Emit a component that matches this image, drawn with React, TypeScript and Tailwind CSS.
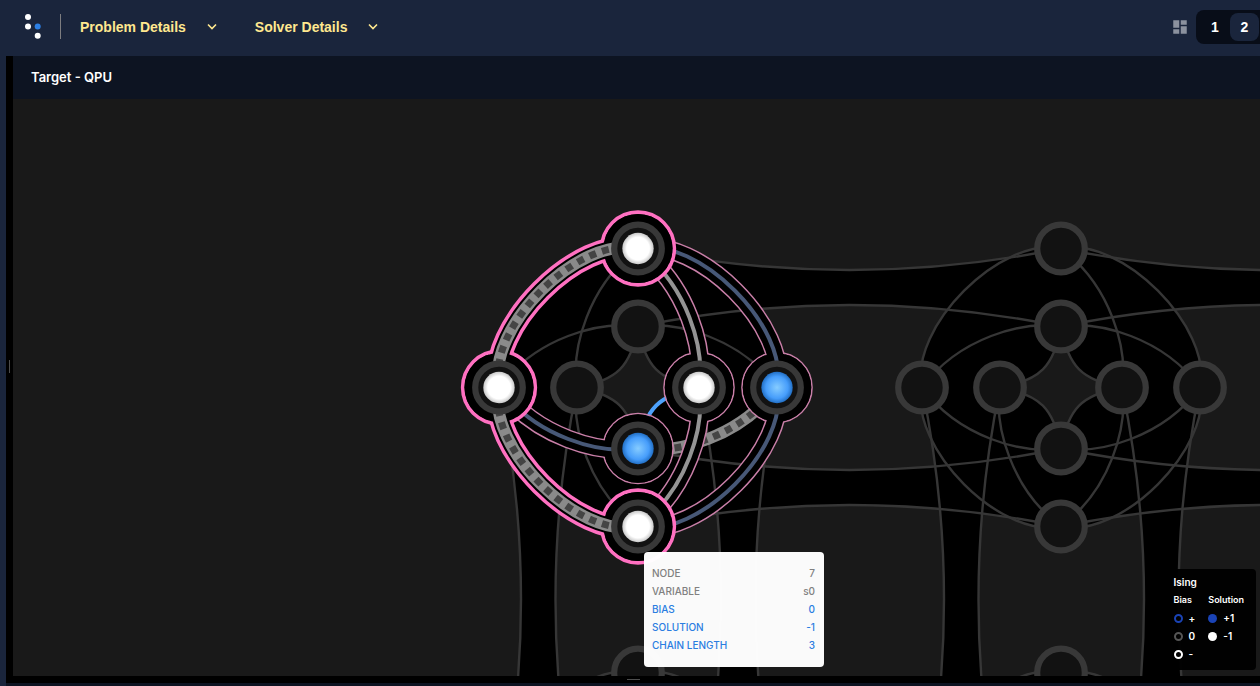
import React from "react";
import { MdDashboard } from "react-icons/md";

type Point = [number, number];
type Side = "top" | "right" | "bottom" | "left";
type Ring = "outer" | "inner";

const INNER = 61;
const OUTER = 139;
const PITCH = 423;
const LINE = "#363636";

const cells = { a: [638, 387] as Point, b: [1061, 387] as Point };
const lowerCells: Point[] = [
  [638, 811],
  [1061, 811],
];

const quadrants: [number, number][] = [
  [-1, -1],
  [1, -1],
  [1, 1],
  [-1, 1],
];

/* Coupler inside a cell, from the vertical-axis qubit to the horizontal-axis qubit. */
function coupler([cx, cy]: Point, [sx, sy]: [number, number], vertical: Ring, horizontal: Ring) {
  const p = (x: number, y: number) => `${cx + sx * x},${cy + sy * y}`;
  if (vertical === "outer" && horizontal === "outer")
    return `M${p(0, OUTER)} C${p(60, 152)} ${p(152, 60)} ${p(OUTER, 0)}`;
  if (vertical === "outer") return `M${p(0, OUTER)} C${p(50, 102)} ${p(67, 38)} ${p(INNER, 0)}`;
  if (horizontal === "outer") return `M${p(0, INNER)} C${p(38, 67)} ${p(102, 50)} ${p(OUTER, 0)}`;
  return `M${p(0, INNER)} C${p(7, 21)} ${p(21, 7)} ${p(INNER, 0)}`;
}

function ringShape([cx, cy]: Point, r: number, a: number, b: number) {
  const p = (x: number, y: number) => `${cx + x},${cy + y}`;
  return (
    `M${p(0, -r)} C${p(a, -b)} ${p(b, -a)} ${p(r, 0)} C${p(b, a)} ${p(a, b)} ${p(0, r)} ` +
    `C${p(-a, b)} ${p(-b, a)} ${p(-r, 0)} C${p(-b, -a)} ${p(-a, -b)} ${p(0, -r)}Z`
  );
}

function nodeAt([cx, cy]: Point, side: Side, ring: Ring): Point {
  const r = ring === "outer" ? OUTER : INNER;
  if (side === "top") return [cx, cy - r];
  if (side === "bottom") return [cx, cy + r];
  return side === "left" ? [cx - r, cy] : [cx + r, cy];
}

const horizontalPairs = [cells.a, cells.b].flatMap(([cx, cy]) => [
  { x: cx, y1: cy - OUTER, b1: 43, y2: cy - INNER, b2: -43 },
  { x: cx, y1: cy + INNER, b1: 43, y2: cy + OUTER, b2: -43 },
]);
const verticalPairs = [cells.a, cells.b].flatMap(([cx, cy]) => [
  { y: cy, x1: cx - OUTER, b1: 44, x2: cx - INNER, b2: -43 },
  { y: cy, x1: cx + INNER, b1: 44, x2: cx + OUTER, b2: -43 },
]);

function Node({ at }: { at: Point }) {
  return <circle cx={at[0]} cy={at[1]} r={23.8} fill="#121212" stroke="#383838" strokeWidth={6.2} />;
}

function Chain({ d, offset }: { d: string; offset: number }) {
  return (
    <>
      <path d={d} stroke="#8a8a8a" strokeWidth={12} />
      <path d={d} stroke="#444444" strokeWidth={7} strokeDasharray="7 6.4" strokeDashoffset={offset} />
    </>
  );
}

function QubitGraph() {
  const { a, b } = cells;
  const allNodes = [a, b, ...lowerCells].flatMap((cell) =>
    (["top", "right", "bottom", "left"] as Side[]).flatMap((side) => [
      nodeAt(cell, side, "outer"),
      nodeAt(cell, side, "inner"),
    ]),
  );
  const top = nodeAt(a, "top", "outer");
  const left = nodeAt(a, "left", "outer");
  const bottom = nodeAt(a, "bottom", "outer");
  const right = nodeAt(a, "right", "outer");
  const innerRight = nodeAt(a, "right", "inner");
  const innerBottom = nodeAt(a, "bottom", "inner");

  const neighbourEdges = [
    { d: coupler(a, [1, -1], "outer", "outer"), color: "#475877" },
    { d: coupler(a, [1, 1], "outer", "outer"), color: "#475877" },
    { d: coupler(a, [-1, 1], "inner", "outer"), color: "#475877" },
    { d: coupler(a, [1, -1], "outer", "inner"), color: "#949494" },
    { d: coupler(a, [1, 1], "outer", "inner"), color: "#949494" },
  ];
  const neighbours = [right, innerRight, innerBottom];
  const chainEdges = [coupler(a, [-1, -1], "outer", "outer"), coupler(a, [-1, 1], "outer", "outer")];
  const chainNodes = [top, left, bottom];

  return (
    <svg
      className="block size-full"
      viewBox="13 98.5 1247 577"
      preserveAspectRatio="xMidYMid slice"
      fill="none"
      role="img"
      aria-label="QPU qubit graph"
    >
      <defs>
        <radialGradient id="up">
          <stop offset="0.72" stopColor="#ffffff" />
          <stop offset="1" stopColor="#c8c8c8" />
        </radialGradient>
        <radialGradient id="down">
          <stop offset="0" stopColor="#86ccff" />
          <stop offset="0.7" stopColor="#469dfb" />
          <stop offset="1" stopColor="#226fc4" />
        </radialGradient>
      </defs>

      <g fill="#000000">
        {horizontalPairs.map(({ x, y1, b1, y2, b2 }) => (
          <path
            key={`${x}-${y1}`}
            d={`M${x},${y1} Q${x + PITCH / 2},${y1 + b1} ${x + PITCH},${y1} V${y2} Q${x + PITCH / 2},${y2 + b2} ${x},${y2}Z`}
          />
        ))}
        {verticalPairs.map(({ y, x1, b1, x2, b2 }) => (
          <path
            key={`${x1}-${y}`}
            d={`M${x1},${y} Q${x1 + b1},${y + 212} ${x1},${y + 424} H${x2} Q${x2 + b2},${y + 212} ${x2},${y}Z`}
          />
        ))}
        {[a, b, ...lowerCells].map((cell) => (
          <path key={cell.join()} d={ringShape(cell, OUTER, 60, 152)} />
        ))}
      </g>
      <g fill="#191919">
        {[a, b].map((cell) => (
          <path key={cell.join()} d={ringShape(cell, INNER, 7, 21)} />
        ))}
      </g>

      <g stroke={LINE} strokeWidth={2.4}>
        {horizontalPairs.map(({ x, y1, b1, y2, b2 }) => (
          <path
            key={`${x}-${y1}`}
            d={`M${x},${y1} q${PITCH / 2},${b1} ${PITCH},0 M${x},${y2} q${PITCH / 2},${b2} ${PITCH},0`}
          />
        ))}
        {verticalPairs.map(({ y, x1, b1, x2, b2 }) => (
          <path key={`${x1}-${y}`} d={`M${x1},${y} q${b1},212 0,424 M${x2},${y} q${b2},212 0,424`} />
        ))}
        {[a, b, ...lowerCells].map((cell) =>
          quadrants.map((q, i) => (
            <g key={`${cell.join()}-${i}`}>
              <path d={coupler(cell, q, "outer", "outer")} />
              {!(cell === b && i === 0) && <path d={coupler(cell, q, "outer", "inner")} />}
              <path d={coupler(cell, q, "inner", "outer")} />
              {!(cell === a && i === 2) && <path d={coupler(cell, q, "inner", "inner")} />}
            </g>
          )),
        )}
      </g>

      <path d={coupler(a, [1, 1], "inner", "inner")} stroke="#4da1fb" strokeWidth={4} />
      <Chain d={coupler(a, [1, 1], "inner", "outer")} offset={3.4} />

      <g stroke="#c97fa8">
        {neighbourEdges.map(({ d }) => (
          <path key={d} d={d} strokeWidth={19} />
        ))}
        {neighbours.map(([x, y]) => (
          <circle key={`${x}-${y}`} cx={x} cy={y} r={35} strokeWidth={1.6} />
        ))}
      </g>
      <g stroke="#000000">
        {neighbourEdges.map(({ d }) => (
          <path key={d} d={d} strokeWidth={16} />
        ))}
        {neighbours.map(([x, y]) => (
          <circle key={`${x}-${y}`} cx={x} cy={y} r={34.3} fill="#000000" stroke="none" />
        ))}
      </g>
      {neighbourEdges.map(({ d, color }) => (
        <path key={d} d={d} stroke={color} strokeWidth={4} />
      ))}

      <g stroke="#ff70c1">
        {chainEdges.map((d) => (
          <path key={d} d={d} strokeWidth={23} />
        ))}
        {chainNodes.map(([x, y]) => (
          <circle key={`${x}-${y}`} cx={x} cy={y} r={36.3} strokeWidth={3.7} />
        ))}
      </g>
      <g stroke="#000000">
        {chainEdges.map((d) => (
          <path key={d} d={d} strokeWidth={16} />
        ))}
        {chainNodes.map(([x, y]) => (
          <circle key={`${x}-${y}`} cx={x} cy={y} r={34.6} fill="#000000" stroke="none" />
        ))}
      </g>
      {chainEdges.map((d) => (
        <Chain key={d} d={d} offset={-2.7} />
      ))}

      {allNodes.map((at) => (
        <Node key={at.join()} at={at} />
      ))}
      {[top, left, bottom, innerRight].map(([x, y]) => (
        <circle key={`${x}-${y}`} cx={x} cy={y} r={15.7} fill="url(#up)" />
      ))}
      {[right, innerBottom].map(([x, y]) => (
        <circle key={`${x}-${y}`} cx={x} cy={y} r={15.7} fill="url(#down)" />
      ))}
    </svg>
  );
}

function Logo() {
  return (
    <svg className="h-[25px] w-5" viewBox="0 0 20 25" aria-hidden="true">
      <circle cx="5" cy="3" r="3" fill="#ffffff" />
      <circle cx="5" cy="12.4" r="3" fill="#ffffff" />
      <circle cx="14.7" cy="12.4" r="3" fill="#2c7fe4" />
      <circle cx="14.7" cy="21.8" r="3" fill="#ffffff" />
    </svg>
  );
}

function MenuButton({ label }: { label: string }) {
  return (
    <button className="flex items-center gap-[21px] font-bold text-[#ffe88f]">
      <span className="pt-px">{label}</span>
      <svg className="h-2 w-[10px]" viewBox="0 0 10 8" fill="none" aria-hidden="true">
        <path d="M1 1.5 L5 5.5 L9 1.5" stroke="#ffe88f" strokeWidth="1.6" />
      </svg>
    </button>
  );
}

function Header() {
  return (
    <header className="flex h-14 shrink-0 items-center bg-[#1a253c] pb-[3px] pl-[23px] text-sm">
      <Logo />
      <div className="ml-[17px] h-[25px] w-px bg-[#7d7d80]" />
      <nav className="ml-[19px] flex gap-[38px]">
        <MenuButton label="Problem Details" />
        <MenuButton label="Solver Details" />
      </nav>
      <div className="ml-auto flex items-center gap-[7px]">
        <button aria-label="Dashboard layout">
          <MdDashboard className="size-[18px] text-[#8b919e]" />
        </button>
        <div className="flex h-[34px] items-center rounded-l-lg bg-[#080d18] pr-px text-sm font-bold text-white">
          <button className="w-[34px] pl-1">1</button>
          <button className="h-7 w-[29px] rounded-lg bg-[#1a253c]">2</button>
        </div>
      </div>
    </header>
  );
}

const details = [
  { label: "NODE", value: "7", tone: "text-[#808080]" },
  { label: "VARIABLE", value: "s0", tone: "text-[#808080]" },
  { label: "BIAS", value: "0", tone: "text-[#2a7de1]" },
  { label: "SOLUTION", value: "-1", tone: "text-[#2a7de1]" },
  { label: "CHAIN LENGTH", value: "3", tone: "text-[#2a7de1]" },
];

function Tooltip() {
  return (
    <dl className="absolute top-[453px] left-[631px] w-[180px] rounded bg-white/98 px-2 pt-3 pb-[13px] font-['Inter',sans-serif] text-[10px] leading-[18px] font-medium">
      {details.map(({ label, value, tone }) => (
        <div key={label} className={`flex justify-between pr-px ${tone}`}>
          <dt>{label}</dt>
          <dd>{value}</dd>
        </div>
      ))}
    </dl>
  );
}

function LegendRow({ marker, label }: { marker: string; label: string }) {
  return (
    <li className="flex items-center gap-[6px]">
      <i className={`size-[9px] rounded-full ${marker}`} />
      {label}
    </li>
  );
}

function Legend() {
  return (
    <section className="absolute right-1 bottom-[6px] h-[101px] rounded bg-black/95 px-3 pt-1 font-['Inter',sans-serif] font-semibold text-white">
      <h2 className="text-[10px] leading-[18px]">Ising</h2>
      <div className="flex gap-[13px] text-[9px] leading-[18px]">
        <div>
          <h3>Bias</h3>
          <ul className="text-[10px]">
            <LegendRow marker="border-2 border-[#1a43b5]" label="+" />
            <LegendRow marker="border-2 border-[#555555]" label="0" />
            <LegendRow marker="border-2 border-white" label="-" />
          </ul>
        </div>
        <div>
          <h3>Solution</h3>
          <ul className="text-[10px]">
            <LegendRow marker="bg-[#1a43b5]" label="+1" />
            <LegendRow marker="bg-white" label="-1" />
          </ul>
        </div>
      </div>
    </section>
  );
}

export default function App() {
  return (
    <div className="flex h-screen flex-col overflow-hidden bg-[#1a253c] font-['Liberation_Sans',Arial,sans-serif]">
      <Header />
      <div className="flex min-h-0 flex-1 flex-col pl-[6px]">
        <div className="flex min-h-0 flex-1">
          <div className="flex w-[7px] shrink-0 items-center bg-black pl-[3px]">
            <div className="h-[13px] w-px bg-[#4d4d4d]" />
          </div>
          <main className="flex min-w-0 flex-1 flex-col">
            <h1 className="flex h-[43px] shrink-0 items-center bg-[#0d1422] pl-[18px] font-['Inter',sans-serif] text-[13px] font-semibold text-white">
              Target - QPU
            </h1>
            <div className="relative min-h-0 flex-1 overflow-hidden bg-[#191919]">
              <QubitGraph />
              <Tooltip />
              <Legend />
            </div>
          </main>
        </div>
        <div className="flex h-[7px] shrink-0 items-center justify-center bg-black">
          <div className="h-px w-[13px] bg-[#4d4d4d]" />
        </div>
        <div className="h-[3px] shrink-0 bg-[#0d1422]" />
      </div>
    </div>
  );
}
